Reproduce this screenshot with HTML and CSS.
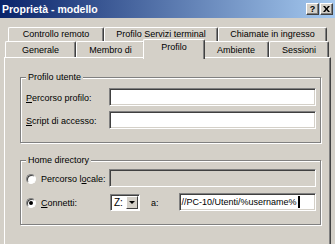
FILE: index.html
```html
<!DOCTYPE html>
<html lang="it">
<head>
  <meta charset="UTF-8">
  <title>Proprietà - modello</title>
  <link rel="stylesheet" href="styles.css">
</head>
<body>

<div class="dialog">
  <div class="titlebar">
    <span class="title">Proprietà - modello</span>
    <span class="tb-buttons">
      <span class="tb-btn help">?</span>
      <span class="tb-btn">
        <svg width="7" height="6" viewBox="0 0 7 6"><path d="M0 0 L2 0 L3.5 2 L5 0 L7 0 L4.5 3 L7 6 L5 6 L3.5 4 L2 6 L0 6 L2.5 3 Z" fill="#000"/></svg>
      </span>
    </span>
  </div>

  <!-- schede -->
  <div class="tabs">
    <div class="tab-row back">
      <div class="tab">Controllo remoto</div>
      <div class="tab">Profilo Servizi terminal</div>
      <div class="tab">Chiamate in ingresso</div>
    </div>
    <div class="tab-row front">
      <div class="tab">Generale</div>
      <div class="tab">Membro di</div>
      <div class="tab active">Profilo</div>
      <div class="tab">Ambiente</div>
      <div class="tab">Sessioni</div>
    </div>
  </div>

  <div class="panel">
    <fieldset class="group">
      <legend>Profilo utente</legend>
      <div class="rows">
        <div class="row">
          <label class="lbl"><u>P</u>ercorso profilo:</label>
          <div class="field"></div>
        </div>
        <div class="row">
          <label class="lbl"><u>S</u>cript di accesso:</label>
          <div class="field"></div>
        </div>
      </div>
    </fieldset>

    <fieldset class="group home">
      <legend>Home directory</legend>
      <div class="rows">
        <div class="row">
          <label class="lbl"><span class="radio"></span>Percorso l<u>o</u>cale:</label>
          <div class="field disabled"></div>
        </div>
        <div class="row">
          <label class="lbl"><span class="radio checked"></span><u>C</u>onnetti:</label>
          <div class="combo">
            <span class="combo-val">Z:</span>
            <span class="combo-btn"><span class="arrow"></span></span>
          </div>
          <span class="to">a:</span>
          <div class="field path">//PC-10/Utenti/%username%<span class="caret"></span></div>
        </div>
      </div>
    </fieldset>
  </div>
</div>

</body>
</html>
```

FILE: styles.css
```css
:root {
  --face: #d4d0c8;
  --shadow: #808080;
  --dark: #404040;
  --light: #ffffff;
}

* {
  box-sizing: border-box;
}

body {
  margin: 0;
  background: var(--face);
  font-family: 'Liberation Sans', Arial, sans-serif;
  font-size: 9px;
  color: #000;
}

.dialog {
  width: 335px;
  height: 244px;
  display: flex;
  flex-direction: column;
  overflow: hidden;
}

/* barra del titolo */
.titlebar {
  height: 18px;
  flex: none;
  display: flex;
  align-items: center;
  justify-content: space-between;
  padding: 0 2px;
  background: linear-gradient(to right, #0a246a, #a6caf0);
}

.title {
  color: #fff;
  font-weight: bold;
  font-size: 10.5px;
}

.tb-buttons {
  display: flex;
  gap: 1px;
}

.tb-btn {
  width: 13px;
  height: 12px;
  display: flex;
  align-items: center;
  justify-content: center;
  background: var(--face);
  border: 1px solid;
  border-color: var(--light) var(--dark) var(--dark) var(--light);
  box-shadow: inset -1px -1px var(--shadow);
  font-weight: bold;
  font-size: 9px;
  line-height: 1;
}

/* schede */
.tabs {
  padding-top: 9px;
  flex: none;
}

.tab-row {
  display: grid;
}

.tab-row.back {
  grid-template-columns: 96px 114px 109px;
  margin-left: 8px;
  height: 14px;
}

.tab-row.front {
  grid-template-columns: 71px 69px 58px 66px 60px;
  margin-left: 5px;
  height: 16px;
}

.tab {
  border-top: 1px solid var(--light);
  border-left: 1px solid var(--light);
  border-right: 1px solid var(--dark);
  box-shadow: inset -1px 0 var(--shadow);
  border-radius: 2px 2px 0 0;
  background: var(--face);
  text-align: center;
  line-height: 13px;
  white-space: nowrap;
}

.tab-row.front .tab {
  line-height: 16px;
}

.tab.active {
  margin: -2px -2px -1px;
  position: relative;
  z-index: 1;
  line-height: 15px !important;
}

/* pannello */
.panel {
  flex: 1;
  margin-left: 4px;
  width: 327px;
  border-top: 1px solid var(--light);
  border-left: 1px solid var(--light);
  border-right: 1px solid var(--dark);
  box-shadow: inset -1px 0 var(--shadow);
  padding-top: 14px;
}

.group {
  margin: 0 0 0 15px;
  width: 301px;
  min-width: 0;
  padding: 5px 4px 13px 5px;
  border: 1px solid var(--shadow);
  box-shadow: inset 1px 1px var(--light), 1px 1px var(--light);
}

.group.home {
  margin-top: 12px;
  padding-top: 3px;
}

.group legend {
  padding: 0 2px;
  line-height: 11px;
  background: var(--face);
}

.rows {
  display: flex;
  flex-direction: column;
  gap: 5px;
}

.home .rows {
  gap: 6px;
}

.row {
  display: flex;
  align-items: center;
}

.lbl {
  width: 83px;
  flex: none;
  display: flex;
  align-items: center;
  white-space: nowrap;
  padding-top: 2px;
}

.field {
  flex: 1;
  height: 18px;
  background: #fff;
  border: 1px solid;
  border-color: var(--shadow) var(--light) var(--light) var(--shadow);
  box-shadow: inset 1px 1px var(--dark), inset -1px -1px var(--face);
}

.field.disabled {
  background: var(--face);
}

.field.path {
  flex: none;
  width: 137px;
  margin-left: 20px;
  display: flex;
  align-items: center;
  padding-left: 2px;
  font-size: 9px;
}

.caret {
  display: inline-block;
  width: 2px;
  height: 12px;
  background: #000;
  margin-left: 1px;
}

/* radio */
.radio {
  width: 10px;
  height: 10px;
  flex: none;
  margin-right: 5px;
  border-radius: 50%;
  background: #fff;
  border: 1px solid;
  border-color: var(--shadow) var(--light) var(--light) var(--shadow);
  box-shadow: inset 1px 1px var(--dark);
  display: flex;
  align-items: center;
  justify-content: center;
}

.radio.checked::after {
  content: '';
  width: 4px;
  height: 4px;
  border-radius: 50%;
  background: #000;
}

/* combo */
.combo {
  margin-left: 1px;
  width: 30px;
  height: 17px;
  display: flex;
  align-items: stretch;
  background: #fff;
  border: 1px solid;
  border-color: var(--shadow) var(--light) var(--light) var(--shadow);
  box-shadow: inset 1px 1px var(--dark);
  padding: 1px;
}

.combo-val {
  flex: 1;
  padding-left: 2px;
  line-height: 13px;
  font-size: 10px;
}

.combo-btn {
  width: 12px;
  background: var(--face);
  border: 1px solid;
  border-color: var(--light) var(--dark) var(--dark) var(--light);
  display: flex;
  align-items: center;
  justify-content: center;
}

.arrow {
  width: 0;
  height: 0;
  border-left: 3px solid transparent;
  border-right: 3px solid transparent;
  border-top: 3px solid #000;
}

.to {
  margin-left: 11px;
  padding-top: 2px;
}
```
